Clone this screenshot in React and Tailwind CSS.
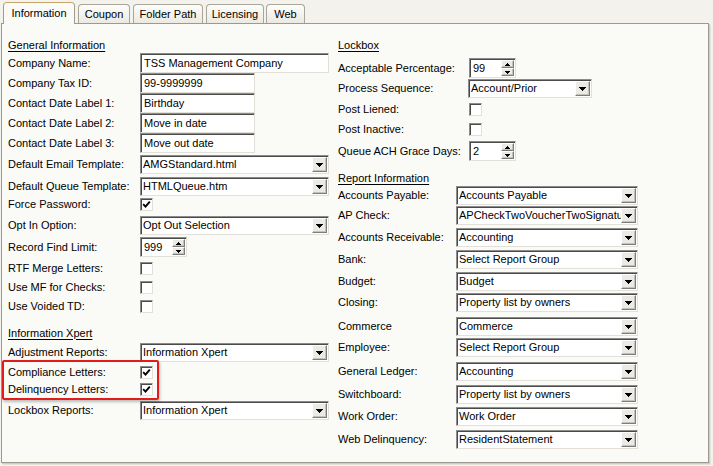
import React from "react";

const sunken =
  "border border-t-[#8c8c8c] border-l-[#8c8c8c] border-r-[#e2e0d8] border-b-[#e2e0d8] shadow-[inset_1px_1px_0_#4a4a4a] bg-white";
const raised =
  "bg-[#ebeae4] border border-t-[#ffffff] border-l-[#ffffff] border-r-[#7d7d7d] border-b-[#7d7d7d] shadow-[inset_-1px_-1px_0_#c4c2ba]";

function Arrow() {
  return (
    <svg width="7" height="4" viewBox="0 0 7 4" className="block">
      <path d="M0 0H7V1H6V2H5V3H4V4H3V3H2V2H1V1H0Z" fill="#000" />
    </svg>
  );
}

function SmallUp() {
  return (
    <svg width="5" height="3" viewBox="0 0 5 3" className="block">
      <path d="M2 0H3V1H4V2H5V3H0V2H1V1H2Z" fill="#000" />
    </svg>
  );
}
function SmallDown() {
  return (
    <svg width="5" height="3" viewBox="0 0 5 3" className="block">
      <path d="M0 0H5V1H4V2H3V3H2V2H1V1H0Z" fill="#000" />
    </svg>
  );
}

function TextBox({ value, w }) {
  return (
    <div className={`${sunken} ${w} h-[20px] flex items-center pl-[3px] whitespace-nowrap overflow-hidden`}>
      {value}
    </div>
  );
}

function Select({ value, w }) {
  return (
    <div className={`${sunken} ${w} h-[19px] flex items-stretch`}>
      <div className="flex-1 min-w-0 flex items-center pl-[2px] whitespace-nowrap overflow-hidden">{value}</div>
      <div className={`${raised} w-[15px] mt-[1px] mb-[1px] mr-[1px] flex items-center justify-center shrink-0`}>
        <Arrow />
      </div>
    </div>
  );
}

function Spinner({ value }) {
  return (
    <div className={`${sunken} w-[47px] h-[20px] flex items-stretch`}>
      <div className="flex-1 flex items-center pl-[3px]">{value}</div>
      <div className="w-[14px] flex flex-col py-[1px] pr-[1px] gap-0 shrink-0">
        <div className={`${raised} flex-1 flex items-center justify-center`}>
          <SmallUp />
        </div>
        <div className={`${raised} flex-1 flex items-center justify-center`}>
          <SmallDown />
        </div>
      </div>
    </div>
  );
}

function Check({ checked }) {
  return (
    <div className={`${sunken} w-[13px] h-[13px] flex items-center justify-center`}>
      {checked && (
        <svg width="9" height="9" viewBox="0 0 9 9" className="block">
          <path d="M1.2 4.2 L3.5 6.6 L7.8 1.6" stroke="#000" strokeWidth="1.9" fill="none" />
        </svg>
      )}
    </div>
  );
}

function Row({ label, lw, mt, h, children }) {
  return (
    <div className={`flex items-center ${mt} ${h}`}>
      <span className={`${lw} shrink-0 whitespace-nowrap`}>{label}</span>
      {children}
    </div>
  );
}

function Heading({ text, mt }) {
  return (
    <div className={`h-[14px] flex items-center ${mt}`}>
      <span className="underline underline-offset-[2px]">{text}</span>
    </div>
  );
}

function Tab({ label, selected, w }) {
  if (selected) {
    return (
      <div
        className={`${w} h-[22px] -mb-px relative z-10 bg-[#fafaf6] border border-b-0 border-[#a29c8c] border-t-[#c9a56c] rounded-t-[4px] flex items-center justify-center`}
      >
        <span className="-mt-[1px]">{label}</span>
      </div>
    );
  }
  return (
    <div
      className={`${w} h-[19px] bg-gradient-to-b from-[#fdfdfb] to-[#ebe9e1] border border-b-0 border-[#a9a598] rounded-t-[4px] flex items-center justify-center`}
    >
      <span className="mt-[1px]">{label}</span>
    </div>
  );
}

export default function App() {
  const L = "w-[132px]";
  const R1 = "w-[130px]";
  const R2 = "w-[118px]";
  return (
    <div className="relative w-[713px] h-[466px] bg-[#f3f2ec] text-[11px] leading-[13px] text-black font-['Liberation_Sans',Arial,sans-serif] overflow-hidden">
      {/* Tabs */}
      <div className="h-[23px] flex items-end pl-[3px] gap-[1px]">
        <Tab label="Information" selected w="w-[72px]" />
        <div className="w-[1px]" />
        <Tab label="Coupon" w="w-[52px]" />
        <div className="w-[1px]" />
        <Tab label="Folder Path" w="w-[70px]" />
        <div className="w-[1px]" />
        <Tab label="Licensing" w="w-[58px]" />
        <div className="w-[0px]" />
        <Tab label="Web" w="w-[39px]" />
      </div>

      {/* Panel */}
      <div className="ml-[1px] w-[708px] h-[440px] bg-[#fafaf6] border border-[#9c9a90] shadow-[1px_1px_0_#cfcdc4,2px_2px_0_#e4e2da] flex">
        {/* Left column */}
        <div className="w-[336px] pl-[6px] pt-[14px] flex flex-col">
          <Heading text="General Information" mt="mt-0" />
          <Row label="Company Name:" lw={L} mt="mt-[1px]" h="h-[20px]">
            <TextBox value="TSS Management Company" w="w-[189px]" />
          </Row>
          <Row label="Company Tax ID:" lw={L} mt="mt-0" h="h-[20px]">
            <TextBox value="99-9999999" w="w-[115px]" />
          </Row>
          <Row label="Contact Date Label 1:" lw={L} mt="mt-0" h="h-[20px]">
            <TextBox value="Birthday" w="w-[115px]" />
          </Row>
          <Row label="Contact Date Label 2:" lw={L} mt="mt-0" h="h-[20px]">
            <TextBox value="Move in date" w="w-[115px]" />
          </Row>
          <Row label="Contact Date Label 3:" lw={L} mt="mt-0" h="h-[20px]">
            <TextBox value="Move out date" w="w-[115px]" />
          </Row>
          <Row label="Default Email Template:" lw={L} mt="mt-[2px]" h="h-[19px]">
            <Select value="AMGStandard.html" w="w-[189px]" />
          </Row>
          <Row label="Default Queue Template:" lw={L} mt="mt-[3px]" h="h-[19px]">
            <Select value="HTMLQueue.htm" w="w-[189px]" />
          </Row>
          <Row label="Force Password:" lw={L} mt="mt-[2px]" h="h-[13px]">
            <Check checked />
          </Row>
          <Row label="Opt In Option:" lw={L} mt="mt-[5px]" h="h-[19px]">
            <Select value="Opt Out Selection" w="w-[189px]" />
          </Row>
          <Row label="Record Find Limit:" lw={L} mt="mt-[2px]" h="h-[20px]">
            <Spinner value="999" />
          </Row>
          <Row label="RTF Merge Letters:" lw={L} mt="mt-[5px]" h="h-[13px]">
            <Check />
          </Row>
          <Row label="Use MF for Checks:" lw={L} mt="mt-[6px]" h="h-[13px]">
            <Check />
          </Row>
          <Row label="Use Voided TD:" lw={L} mt="mt-[6px]" h="h-[13px]">
            <Check />
          </Row>
          <Heading text="Information Xpert" mt="mt-[13px]" />
          <Row label="Adjustment Reports:" lw={L} mt="mt-[3px]" h="h-[19px]">
            <Select value="Information Xpert" w="w-[189px]" />
          </Row>
          <Row label="Compliance Letters:" lw={L} mt="mt-[4px]" h="h-[13px]">
            <Check checked />
          </Row>
          <Row label="Delinquency Letters:" lw={L} mt="mt-[4px]" h="h-[13px]">
            <Check checked />
          </Row>
          <Row label="Lockbox Reports:" lw={L} mt="mt-[5px]" h="h-[19px]">
            <Select value="Information Xpert" w="w-[189px]" />
          </Row>
        </div>

        {/* Right column */}
        <div className="flex-1 pt-[14px] flex flex-col">
          <Heading text="Lockbox" mt="mt-0" />
          <Row label="Acceptable Percentage:" lw={R1} mt="mt-[6px]" h="h-[20px]">
            <div className="ml-[1px]">
              <Spinner value="99" />
            </div>
          </Row>
          <Row label="Process Sequence:" lw={R1} mt="mt-[1px]" h="h-[19px]">
            <Select value="Account/Prior" w="w-[124px]" />
          </Row>
          <Row label="Post Liened:" lw={R1} mt="mt-[5px]" h="h-[13px]">
            <div className="ml-[1px]">
              <Check />
            </div>
          </Row>
          <Row label="Post Inactive:" lw={R1} mt="mt-[7px]" h="h-[13px]">
            <div className="ml-[1px]">
              <Check />
            </div>
          </Row>
          <Row label="Queue ACH Grace Days:" lw={R1} mt="mt-[5px]" h="h-[20px]">
            <div className="ml-[1px]">
              <Spinner value="2" />
            </div>
          </Row>
          <Heading text="Report Information" mt="mt-[10px]" />
          <Row label="Accounts Payable:" lw={R2} mt="mt-[1px]" h="h-[19px]">
            <Select value="Accounts Payable" w="w-[182px]" />
          </Row>
          <Row label="AP Check:" lw={R2} mt="mt-[1px]" h="h-[19px]">
            <Select value="APCheckTwoVoucherTwoSignature" w="w-[182px]" />
          </Row>
          <Row label="Accounts Receivable:" lw={R2} mt="mt-[3px]" h="h-[19px]">
            <Select value="Accounting" w="w-[182px]" />
          </Row>
          <Row label="Bank:" lw={R2} mt="mt-[3px]" h="h-[19px]">
            <Select value="Select Report Group" w="w-[182px]" />
          </Row>
          <Row label="Budget:" lw={R2} mt="mt-[3px]" h="h-[19px]">
            <Select value="Budget" w="w-[182px]" />
          </Row>
          <Row label="Closing:" lw={R2} mt="mt-[2px]" h="h-[19px]">
            <Select value="Property list by owners" w="w-[182px]" />
          </Row>
          <Row label="Commerce" lw={R2} mt="mt-[5px]" h="h-[19px]">
            <Select value="Commerce" w="w-[182px]" />
          </Row>
          <Row label="Employee:" lw={R2} mt="mt-[2px]" h="h-[19px]">
            <Select value="Select Report Group" w="w-[182px]" />
          </Row>
          <Row label="General Ledger:" lw={R2} mt="mt-[5px]" h="h-[19px]">
            <Select value="Accounting" w="w-[182px]" />
          </Row>
          <Row label="Switchboard:" lw={R2} mt="mt-[4px]" h="h-[19px]">
            <Select value="Property list by owners" w="w-[182px]" />
          </Row>
          <Row label="Work Order:" lw={R2} mt="mt-[3px]" h="h-[19px]">
            <Select value="Work Order" w="w-[182px]" />
          </Row>
          <Row label="Web Delinquency:" lw={R2} mt="mt-[4px]" h="h-[19px]">
            <Select value="ResidentStatement" w="w-[182px]" />
          </Row>
        </div>
      </div>

      {/* Red highlight annotation */}
      <div className="absolute left-[2px] top-[360px] w-[157px] h-[40px] border-2 border-[#e41b1b] rounded-[2px] shadow-[1px_2px_3px_rgba(0,0,0,0.25)] pointer-events-none" />
    </div>
  );
}
